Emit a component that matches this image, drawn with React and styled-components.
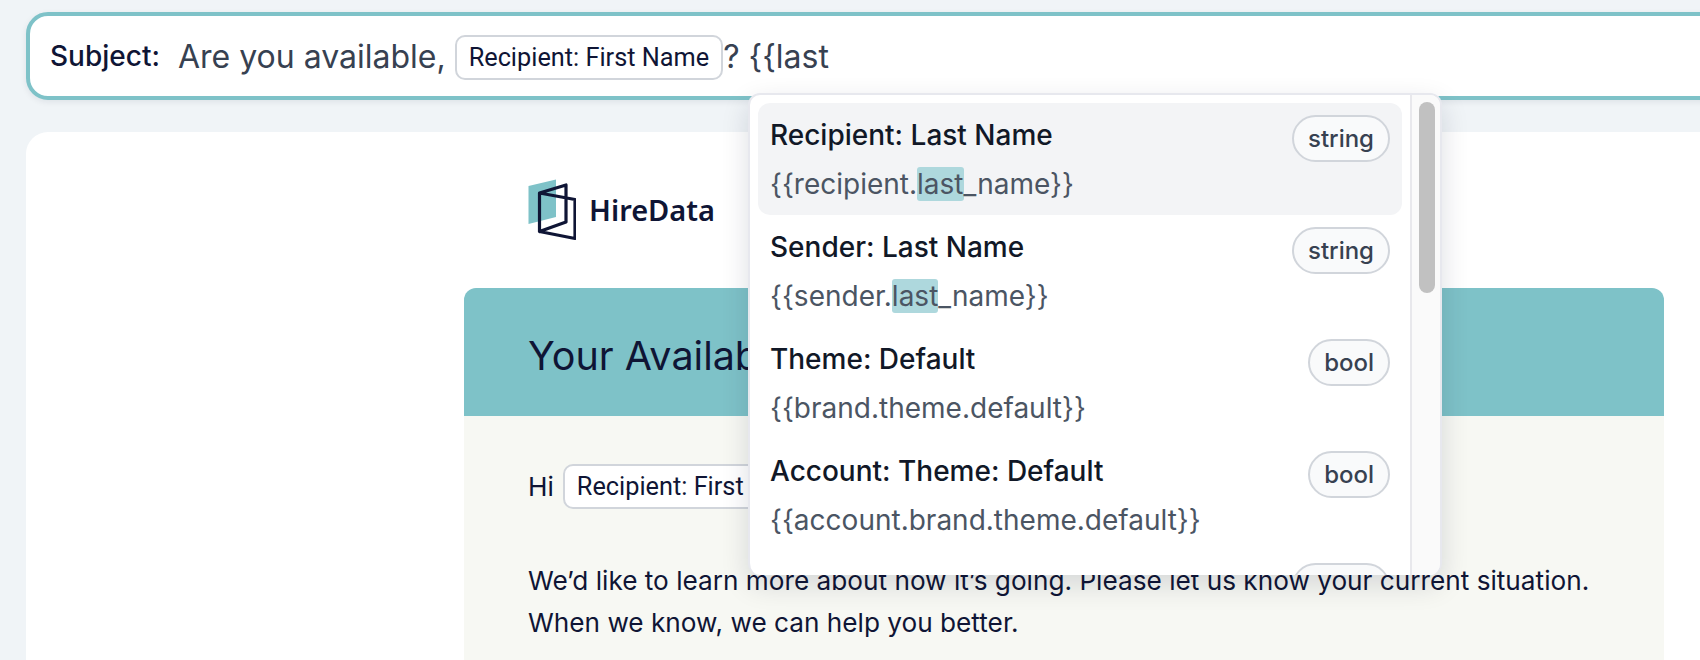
import React from 'react';
import styled, { createGlobalStyle } from 'styled-components';

const GlobalStyle = createGlobalStyle`
  html, body {
    margin: 0;
    height: 660px;
    overflow: hidden;
    background: #f0f4f7;
  }
  * {
    box-sizing: border-box;
  }
`;

const Page = styled.div`
  position: relative;
  width: 1700px;
  height: 660px;
  padding: 12px 0 0 26px;
  overflow: hidden;
  font-family: Inter, 'Liberation Sans', sans-serif;
  color: #0f1535;
`;

const SubjectBar = styled.div`
  display: flex;
  align-items: center;
  width: 1720px;
  height: 88px;
  padding: 0 20px;
  background: #fff;
  border: 4px solid #7ec2c8;
  border-radius: 22px;
  box-shadow: 0 2px 6px rgba(15, 21, 53, 0.08);
`;

const SubjectLabel = styled.span`
  margin-right: 18px;
  font-size: 28px;
  font-weight: 500;
  color: #0f1535;
`;

const SubjectText = styled.span`
  font-size: 32px;
  color: #374151;
  white-space: pre;
`;

const VarChip = styled.span`
  display: inline-flex;
  align-items: center;
  height: 45px;
  padding: 0 12px;
  margin: ${(p) => p.$margin || '2px 0 0'};
  background: #fff;
  border: 2px solid #d1d5db;
  border-radius: 10px;
  font-family: Roboto, sans-serif;
  font-size: 25.3px;
  color: #0f1535;
  white-space: nowrap;
`;

const Card = styled.main`
  display: flex;
  flex-direction: column;
  align-items: flex-end;
  width: 1700px;
  height: 600px;
  margin-top: 32px;
  padding: 40px 62px 0 0;
  background: #fff;
  border-radius: 22px;
`;

const EmailColumn = styled.div`
  width: 1200px;
`;

const Logo = styled.div`
  display: flex;
  align-items: center;
  gap: 13px;
  height: 116px;
  padding: 0 0 41px 64px;
  font-family: 'Noto Sans', sans-serif;
  font-size: 29px;
  font-weight: 600;
  color: #0f1535;
`;

const EmailHeader = styled.header`
  height: 128px;
  padding: 44px 64px 0;
  background: #7ec2c8;
  border-radius: 12px 12px 0 0;
  font-size: 39.5px;
  line-height: 48px;
`;

const EmailBody = styled.section`
  height: 300px;
  padding: 48px 64px 0;
  background: #f7f8f3;
  font-size: 26.2px;
  line-height: 42px;
`;

const Greeting = styled.p`
  display: flex;
  align-items: center;
  height: 45px;
  margin: 0 0 51px;
`;

const Paragraph = styled.p`
  margin: 0;
`;

const Dropdown = styled.div`
  position: absolute;
  left: 748px;
  top: 93px;
  display: flex;
  width: 694px;
  height: 482px;
  overflow: hidden;
  background: #fff;
  border: 2px solid #e7e8ee;
  border-bottom: 0;
  border-radius: 12px;
  box-shadow: 0 10px 28px rgba(15, 21, 53, 0.14);
`;

const OptionList = styled.ul`
  flex: 1;
  min-width: 0;
  margin: 0;
  padding: 8px 8px 0;
  list-style: none;
`;

const Option = styled.li`
  display: flex;
  justify-content: space-between;
  height: 112px;
  padding: 12px 12px 0;
  background: ${(p) => (p.$active ? '#f3f4f6' : 'transparent')};
  border-radius: 12px;
`;

const OptionName = styled.div`
  margin-top: 2px;
  font-size: 28px;
  font-weight: 500;
  line-height: 36px;
  color: #111827;
`;

const OptionKey = styled.div`
  margin-top: 13px;
  font-size: 28px;
  line-height: 36px;
  color: #4b5563;
`;

const Match = styled.mark`
  background: #aed8dd;
  border-radius: 3px;
  color: inherit;
`;

const TypeTag = styled.span`
  display: inline-flex;
  align-items: center;
  height: 47px;
  min-width: ${(p) => (p.$blank ? '98px' : '0')};
  padding: 0 14px;
  background: #f9fafb;
  border: 2px solid #d1d5db;
  border-radius: 24px;
  font-size: 24px;
  font-weight: 500;
  color: #374151;
`;

const ScrollTrack = styled.div`
  flex: none;
  width: 30px;
  padding: 7px 6px 0 7px;
  background: #fafafa;
  border-left: 2px solid #e8e8ec;
`;

const ScrollThumb = styled.div`
  width: 16px;
  height: 191px;
  background: #c1c1c1;
  border-radius: 8px;
`;

const options = [
  { name: 'Recipient: Last Name', before: '{{recipient.', after: '_name}}', type: 'string' },
  { name: 'Sender: Last Name', before: '{{sender.', after: '_name}}', type: 'string' },
  { name: 'Theme: Default', key_: '{{brand.theme.default}}', type: 'bool' },
  { name: 'Account: Theme: Default', key_: '{{account.brand.theme.default}}', type: 'bool' },
  { name: '', key_: '', type: '' },
];

const LogoMark = () => (
  <svg width="48" height="62" viewBox="0 0 48 62" fill="none">
    <path d="M0.5 7 L28 0.5 V38 L0.5 45 Z" fill="#7ec2c8" />
    <path
      d="M11.5 14 L38 6 V43 L11.5 52.5 Z M11.5 14 L47 20.5 V59.5 L11.5 52.5"
      stroke="#0f1535"
      strokeWidth="3.2"
      strokeLinejoin="round"
    />
  </svg>
);

export default function App() {
  return (
    <>
      <GlobalStyle />
      <Page>
        <SubjectBar>
          <SubjectLabel>Subject:</SubjectLabel>
          <SubjectText>Are you available, </SubjectText>
          <VarChip>Recipient: First Name</VarChip>
          <SubjectText>? {'{{'}last</SubjectText>
        </SubjectBar>

        <Card>
          <EmailColumn>
            <Logo>
              <LogoMark />
              HireData
            </Logo>
            <EmailHeader>Your Availability</EmailHeader>
            <EmailBody>
              <Greeting>
                Hi <VarChip $margin="0 0 0 9px">Recipient: First Name</VarChip>
              </Greeting>
              <Paragraph>
                We’d like to learn more about how it’s going. Please let us know your current situation.
              </Paragraph>
              <Paragraph>When we know, we can help you better.</Paragraph>
            </EmailBody>
          </EmailColumn>
        </Card>

        <Dropdown>
          <OptionList>
            {options.map((o, i) => (
              <Option key={i} $active={i === 0}>
                <div>
                  <OptionName>{o.name}</OptionName>
                  <OptionKey>
                    {o.before ? (
                      <>
                        {o.before}
                        <Match>last</Match>
                        {o.after}
                      </>
                    ) : (
                      o.key_
                    )}
                  </OptionKey>
                </div>
                <TypeTag $blank={!o.type}>{o.type}</TypeTag>
              </Option>
            ))}
          </OptionList>
          <ScrollTrack>
            <ScrollThumb />
          </ScrollTrack>
        </Dropdown>
      </Page>
    </>
  );
}
